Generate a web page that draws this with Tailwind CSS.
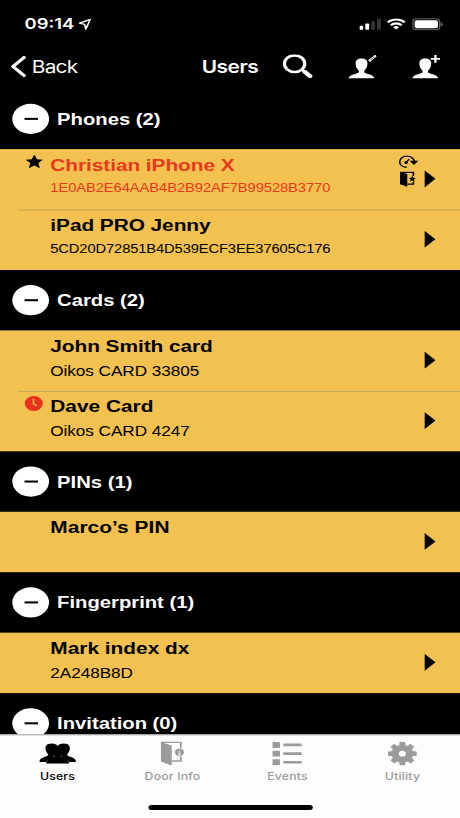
<!DOCTYPE html>
<html lang="en">
<head>
  <meta charset="UTF-8" />
  <meta name="viewport" content="width=device-width, initial-scale=1.0" />
  <title>Users</title>
  <script src="https://cdn.jsdelivr.net/npm/@tailwindcss/browser@4"></script>
</head>
<body class="w-[460px] h-[818px] overflow-hidden bg-black">
  <!-- 375x812 phone screen stretched to the window -->
  <div class="w-[375px] h-[812px] origin-top-left scale-x-[1.2267] scale-y-[1.0074] flex flex-col bg-black text-white font-['Liberation_Sans',sans-serif] overflow-hidden">

    <!-- STATUS BAR -->
    <div class="h-11 shrink-0 flex items-center pl-5 pr-[14px] pt-[3px] font-['Inter',sans-serif]">
      <span class="text-[15px] font-semibold leading-5 w-[40px] whitespace-nowrap">09:14</span>
      <svg class="ml-[3.5px] w-[11px] h-[12px]" viewBox="0 0 11 12" fill="none" stroke="#fff" stroke-width="1.3" stroke-linejoin="round"><path d="M9.6 1.2 L.8 5 L5 6.2 L6 10.8 Z" /></svg>
      <svg class="ml-auto w-[18px] h-[12px]" viewBox="0 0 18 12">
        <rect x="0" y="7.5" width="3.1" height="4" rx=".7" fill="#fff" />
        <rect x="4.8" y="5.4" width="3.1" height="6.1" rx=".7" fill="#fff" />
        <rect x="9.6" y="3" width="3.1" height="8.5" rx=".7" fill="#333" />
        <rect x="14.3" y=".7" width="3.1" height="10.8" rx=".7" fill="#333" />
      </svg>
      <svg class="ml-[4px] w-[16px] h-[12px]" viewBox="0 0 16 12" fill="none" stroke="#fff" stroke-width="2">
        <path d="M1 4.2 A10 10 0 0 1 15 4.2" />
        <path d="M3.6 7 A6.3 6.3 0 0 1 12.4 7" />
        <path d="M5.6 9 A3.4 3.4 0 0 1 10.4 9 L8 11.4 Z" fill="#fff" stroke="none" />
      </svg>
      <svg class="ml-[5px] w-[25px] h-[12px]" viewBox="0 0 25 12">
        <rect x=".5" y=".5" width="22" height="11" rx="3" fill="none" stroke="#777" />
        <rect x="2" y="2" width="19" height="8" rx="1.6" fill="#fff" />
        <path d="M23.6 4 a2.2 2.2 0 0 1 0 4 z" fill="#777" />
      </svg>
    </div>

    <!-- NAV BAR -->
    <div class="h-11 shrink-0 flex items-center pl-[9px] pr-[16px] font-['Inter',sans-serif] text-[17px]">
      <svg class="w-[13px] h-[22px]" viewBox="0 0 13 22" fill="none" stroke="#fff" stroke-width="3" stroke-linecap="round" stroke-linejoin="round"><path d="M10.6 2 L1.6 11 L10.6 20" /></svg>
      <span class="ml-[4px] pt-px w-[139px] tracking-[-0.65px]">Back</span>
      <span class="w-[66px] pt-px font-semibold tracking-[-0.4px]">Users</span>
      <svg class="w-[25px] h-[24px]" viewBox="0 0 25 24" fill="none" stroke="#fff" stroke-linecap="round">
        <circle cx="10.2" cy="9.2" r="8.3" stroke-width="2.6" />
        <path d="M16.2 15 L18.5 17.2" stroke-width="2.6" />
        <path d="M18.8 17.6 L22.8 21.6" stroke-width="4" />
      </svg>
      <svg class="ml-[29px] w-[23px] h-[24px]" viewBox="0 0 23 24">
        <path fill="#fff" d="M10.7 4 C14 4 15.7 6 15.6 9 C15.5 12.5 14.5 14.6 13 16 L13 18 C14.5 19.5 20.5 19.5 21.5 24 L0 24 C1 19.5 7 19.5 8.5 18 L8.5 16 C7 14.6 6 12.5 5.9 9 C5.8 6 7.5 4 10.7 4 Z" />
        <path d="M16.8 6.6 L22.6 1" stroke="#fff" stroke-width="2.2" />
        <path d="M18 5.5 L21.4 2.2" stroke="#000" stroke-width=".6" />
      </svg>
      <svg class="ml-[29px] w-[23px] h-[24px]" viewBox="0 0 23 24">
        <path fill="#fff" d="M10.7 4 C14 4 15.7 6 15.6 9 C15.5 12.5 14.5 14.6 13 16 L13 18 C14.5 19.5 20.5 19.5 21.5 24 L0 24 C1 19.5 7 19.5 8.5 18 L8.5 16 C7 14.6 6 12.5 5.9 9 C5.8 6 7.5 4 10.7 4 Z" />
        <path d="M15.2 4.4 H22.8 M19 .6 V8.2" stroke="#fff" stroke-width="1.9" />
      </svg>
    </div>

    <!-- LIST -->
    <div class="flex-1 min-h-0 overflow-hidden">
      <div class="h-[60px] flex items-center pl-[10px]">
        <div class="w-[30px] h-[30px] rounded-full bg-white flex items-center justify-center"><div class="w-[11px] h-[1.5px] bg-black"></div></div>
        <h2 class="ml-[6.5px] text-[16.5px] font-bold">Phones (2)</h2>
      </div>
      <div class="bg-[#f2c14f] text-black">
        <div class="h-[60px] flex text-[#e8391d]">
          <div class="w-[41px] pl-[20.5px] pt-[5px]">
            <svg class="w-[14px] h-[15px]" viewBox="0 0 14 15"><path d="M7 .4 L9.1 5 L14 5.5 L10.3 8.8 L11.5 14 L7 11.3 L2.5 14 L3.7 8.8 L0 5.5 L4.9 5 Z" fill="#000" /></svg>
          </div>
          <div class="w-[284px] pt-[6.5px]">
            <p class="text-[17px] leading-5 font-bold tracking-[-0.05px]">Christian iPhone X</p>
            <p class="mt-[2.5px] text-[12px] leading-5 tracking-[-0.06px]">1E0AB2E64AAB4B2B92AF7B99528B3770</p>
          </div>
          <div class="w-[21px] pt-[6px] flex flex-col gap-[3px]">
            <svg class="w-[16px] h-[13px]" viewBox="0 0 16 13" fill="none" stroke="#000" stroke-width="1.3">
              <path d="M6.5 12 C2.5 11.6 .8 9 .8 6.7 C.8 3.4 3.5 1 6.8 1 C10.2 1 12.4 3.4 12.7 6" />
              <path d="M8.8 5.6 H16 L12.4 9.8 Z" fill="#000" stroke="none" />
              <path d="M8.6 4 L6.4 6.7" stroke-width="1.2" />
              <circle cx="6" cy="7.2" r="1.5" fill="#000" stroke="none" />
            </svg>
            <svg class="ml-[1px] w-[13px] h-[16px]" viewBox="0 0 13 16">
              <path d="M0 .6 L6 2.8 V15.4 L0 13 Z" fill="#000" />
              <path d="M.5 1.1 H11 V4.6 M11 10.4 V12.8 H6" fill="none" stroke="#000" stroke-width="1.3" />
              <path d="M10.2 4.2 L11 6.4 L13 6.6 L11.5 8.1 L12 10.5 L10.2 9.2 L8.2 10.5 L8.8 8.1 L7.3 6.6 L9.4 6.4 Z" fill="#000" />
            </svg>
          </div>
          <svg class="mt-[21px] w-[9px] h-[17px]" viewBox="0 0 9 17"><path d="M0 0 L9 8.5 L0 17 Z" fill="#000" /></svg>
        </div>
        <div class="h-[60px] relative flex pl-[41px]">
          <div class="absolute top-[-0.5px] left-[15px] right-0 h-px bg-[#c3a35b]"></div>
          <div class="w-[305px] pt-[6px]">
            <p class="text-[17px] leading-5 font-bold tracking-[-0.05px]">iPad PRO Jenny</p>
            <p class="mt-[3px] text-[12px] leading-5 tracking-[-0.1px]">5CD20D72851B4D539ECF3EE37605C176</p>
          </div>
          <svg class="mt-[21px] w-[9px] h-[17px]" viewBox="0 0 9 17"><path d="M0 0 L9 8.5 L0 17 Z" /></svg>
        </div>
      </div>

      <div class="h-[60px] flex items-center pl-[10px]">
        <div class="w-[30px] h-[30px] rounded-full bg-white flex items-center justify-center"><div class="w-[11px] h-[1.5px] bg-black"></div></div>
        <h2 class="ml-[6.5px] text-[16.5px] font-bold">Cards (2)</h2>
      </div>
      <div class="bg-[#f2c14f] text-black">
        <div class="h-[60px] flex pl-[41px]">
          <div class="w-[305px] pt-[6px]">
            <p class="text-[17px] leading-5 font-bold tracking-[-0.05px]">John Smith card</p>
            <p class="mt-1 text-[14px] leading-5 tracking-[-0.05px]">Oikos CARD 33805</p>
          </div>
          <svg class="mt-[21px] w-[9px] h-[17px]" viewBox="0 0 9 17"><path d="M0 0 L9 8.5 L0 17 Z" /></svg>
        </div>
        <div class="h-[60px] relative flex">
          <div class="absolute top-[-0.5px] left-[15px] right-0 h-px bg-[#c3a35b]"></div>
          <div class="w-[41px] pl-[20px] pt-[5px]">
            <svg class="w-[15px] h-[15px]" viewBox="0 0 15 15"><circle cx="7.5" cy="7.5" r="7.4" fill="#e6331f" /><path d="M7.3 3 V7.8 L10 10" fill="none" stroke="#f2c14f" stroke-width="1.4" /></svg>
          </div>
          <div class="w-[305px] pt-[6px]">
            <p class="text-[17px] leading-5 font-bold">Dave Card</p>
            <p class="mt-1 text-[14px] leading-5 tracking-[-0.05px]">Oikos CARD 4247</p>
          </div>
          <svg class="mt-[21px] w-[9px] h-[17px]" viewBox="0 0 9 17"><path d="M0 0 L9 8.5 L0 17 Z" /></svg>
        </div>
      </div>

      <div class="h-[60px] flex items-center pl-[10px]">
        <div class="w-[30px] h-[30px] rounded-full bg-white flex items-center justify-center"><div class="w-[11px] h-[1.5px] bg-black"></div></div>
        <h2 class="ml-[6.5px] text-[16.5px] font-bold">PINs (1)</h2>
      </div>
      <div class="h-[60px] flex pl-[41px] bg-[#f2c14f] text-black">
        <div class="w-[305px] pt-[6px]">
          <p class="text-[17px] leading-5 font-bold tracking-[0.05px]">Marco’s PIN</p>
        </div>
        <svg class="mt-[21px] w-[9px] h-[17px]" viewBox="0 0 9 17"><path d="M0 0 L9 8.5 L0 17 Z" /></svg>
      </div>

      <div class="h-[60px] flex items-center pl-[10px]">
        <div class="w-[30px] h-[30px] rounded-full bg-white flex items-center justify-center"><div class="w-[11px] h-[1.5px] bg-black"></div></div>
        <h2 class="ml-[6.5px] text-[16.5px] font-bold">Fingerprint (1)</h2>
      </div>
      <div class="h-[60px] flex pl-[41px] bg-[#f2c14f] text-black">
        <div class="w-[305px] pt-[6px]">
          <p class="text-[17px] leading-5 font-bold">Mark index dx</p>
          <p class="mt-1 text-[14px] leading-5 tracking-[-0.05px]">2A248B8D</p>
        </div>
        <svg class="mt-[21px] w-[9px] h-[17px]" viewBox="0 0 9 17"><path d="M0 0 L9 8.5 L0 17 Z" /></svg>
      </div>

      <div class="h-[60px] flex items-center pl-[10px]">
        <div class="w-[30px] h-[30px] rounded-full bg-white flex items-center justify-center"><div class="w-[11px] h-[1.5px] bg-black"></div></div>
        <h2 class="ml-[6.5px] text-[16.5px] font-bold">Invitation (0)</h2>
      </div>
    </div>

    <!-- TAB BAR -->
    <div class="h-[83px] shrink-0 bg-[#fdfdfd] flex flex-col items-center border-t border-[#b0b0b0]">
      <div class="w-full h-[69px] grid grid-cols-4 text-[10px] leading-3 tracking-[0.15px] font-medium text-[#9b9b9b] font-['Inter',sans-serif]">
        <div class="flex flex-col items-center pt-[6px] text-black">
          <svg class="w-[30px] h-[24px]" viewBox="0 0 30 24">
            <path d="M10 2 C12.8 2 14.2 3 15 4.4 C15.8 3 17.2 2 20 2 C24 2 25.5 5 24.8 8 C24.4 10.5 23.4 12 22.5 13.3 C23.5 16 29.5 15 30 20.3 H24.2 V22 H5.8 V20.3 H0 C.5 15 6.5 16 7.5 13.3 C6.6 12 5.6 10.5 5.2 8 C4.5 5 6 2 10 2 Z" />
            <path d="M11.7 14.2 L12.2 15.2 M18.3 14.2 L17.8 15.2" stroke="#fff" stroke-width=".7" />
            <path d="M6 20.3 L7.4 18.2 M24 20.3 L22.6 18.2" stroke="#888" stroke-width=".5" />
          </svg>
          <span class="mt-[4px]">Users</span>
        </div>
        <div class="flex flex-col items-center pt-[6px]">
          <svg class="w-[19px] h-[24px]" viewBox="0 0 19 24">
            <path d="M0 .5 L9 4 V23.8 L0 20 Z" fill="#9b9b9b" />
            <path d="M0 .9 H16.4 V6.4 M16.4 15 V19.4 H9" fill="none" stroke="#9b9b9b" stroke-width="1.5" />
            <circle cx="15.3" cy="10.7" r="3.6" fill="#9b9b9b" />
            <path d="M15.3 8.2 V9.2 M14.5 10.2 H15.4 V12.8 M14.3 12.8 H16.5" stroke="#fff" stroke-width=".7" fill="none" />
          </svg>
          <span class="mt-[4px]">Door Info</span>
        </div>
        <div class="flex flex-col items-center pt-[6px]">
          <svg class="w-[24px] h-[24px]" viewBox="0 0 24 24" fill="#9b9b9b">
            <path d="M0 .6 H6.2 V6.4 H0 Z M0 9.2 H6.2 V15 H0 Z M0 17.7 H6.2 V23.7 H0 Z M9 2.1 H24 V4.8 H9 Z M9 10.7 H24 V13.4 H9 Z M9 19.3 H24 V22 H9 Z" />
          </svg>
          <span class="mt-[4px]">Events</span>
        </div>
        <div class="flex flex-col items-center pt-[6px]">
          <svg class="w-[24px] h-[24px]" viewBox="-12 -12.1 24 24">
            <g fill="#9b9b9b">
              <rect x="-2.4" y="-11.7" width="4.8" height="23.4" rx=".8" />
              <rect x="-2.4" y="-11.7" width="4.8" height="23.4" rx=".8" transform="rotate(45)" />
              <rect x="-2.4" y="-11.7" width="4.8" height="23.4" rx=".8" transform="rotate(90)" />
              <rect x="-2.4" y="-11.7" width="4.8" height="23.4" rx=".8" transform="rotate(135)" />
              <circle r="8.9" />
            </g>
            <circle r="2.9" fill="#fdfdfd" />
          </svg>
          <span class="mt-[4px]">Utility</span>
        </div>
      </div>
      <div class="w-[134px] h-[5px] rounded-full bg-black"></div>
    </div>
  </div>
</body>
</html>
